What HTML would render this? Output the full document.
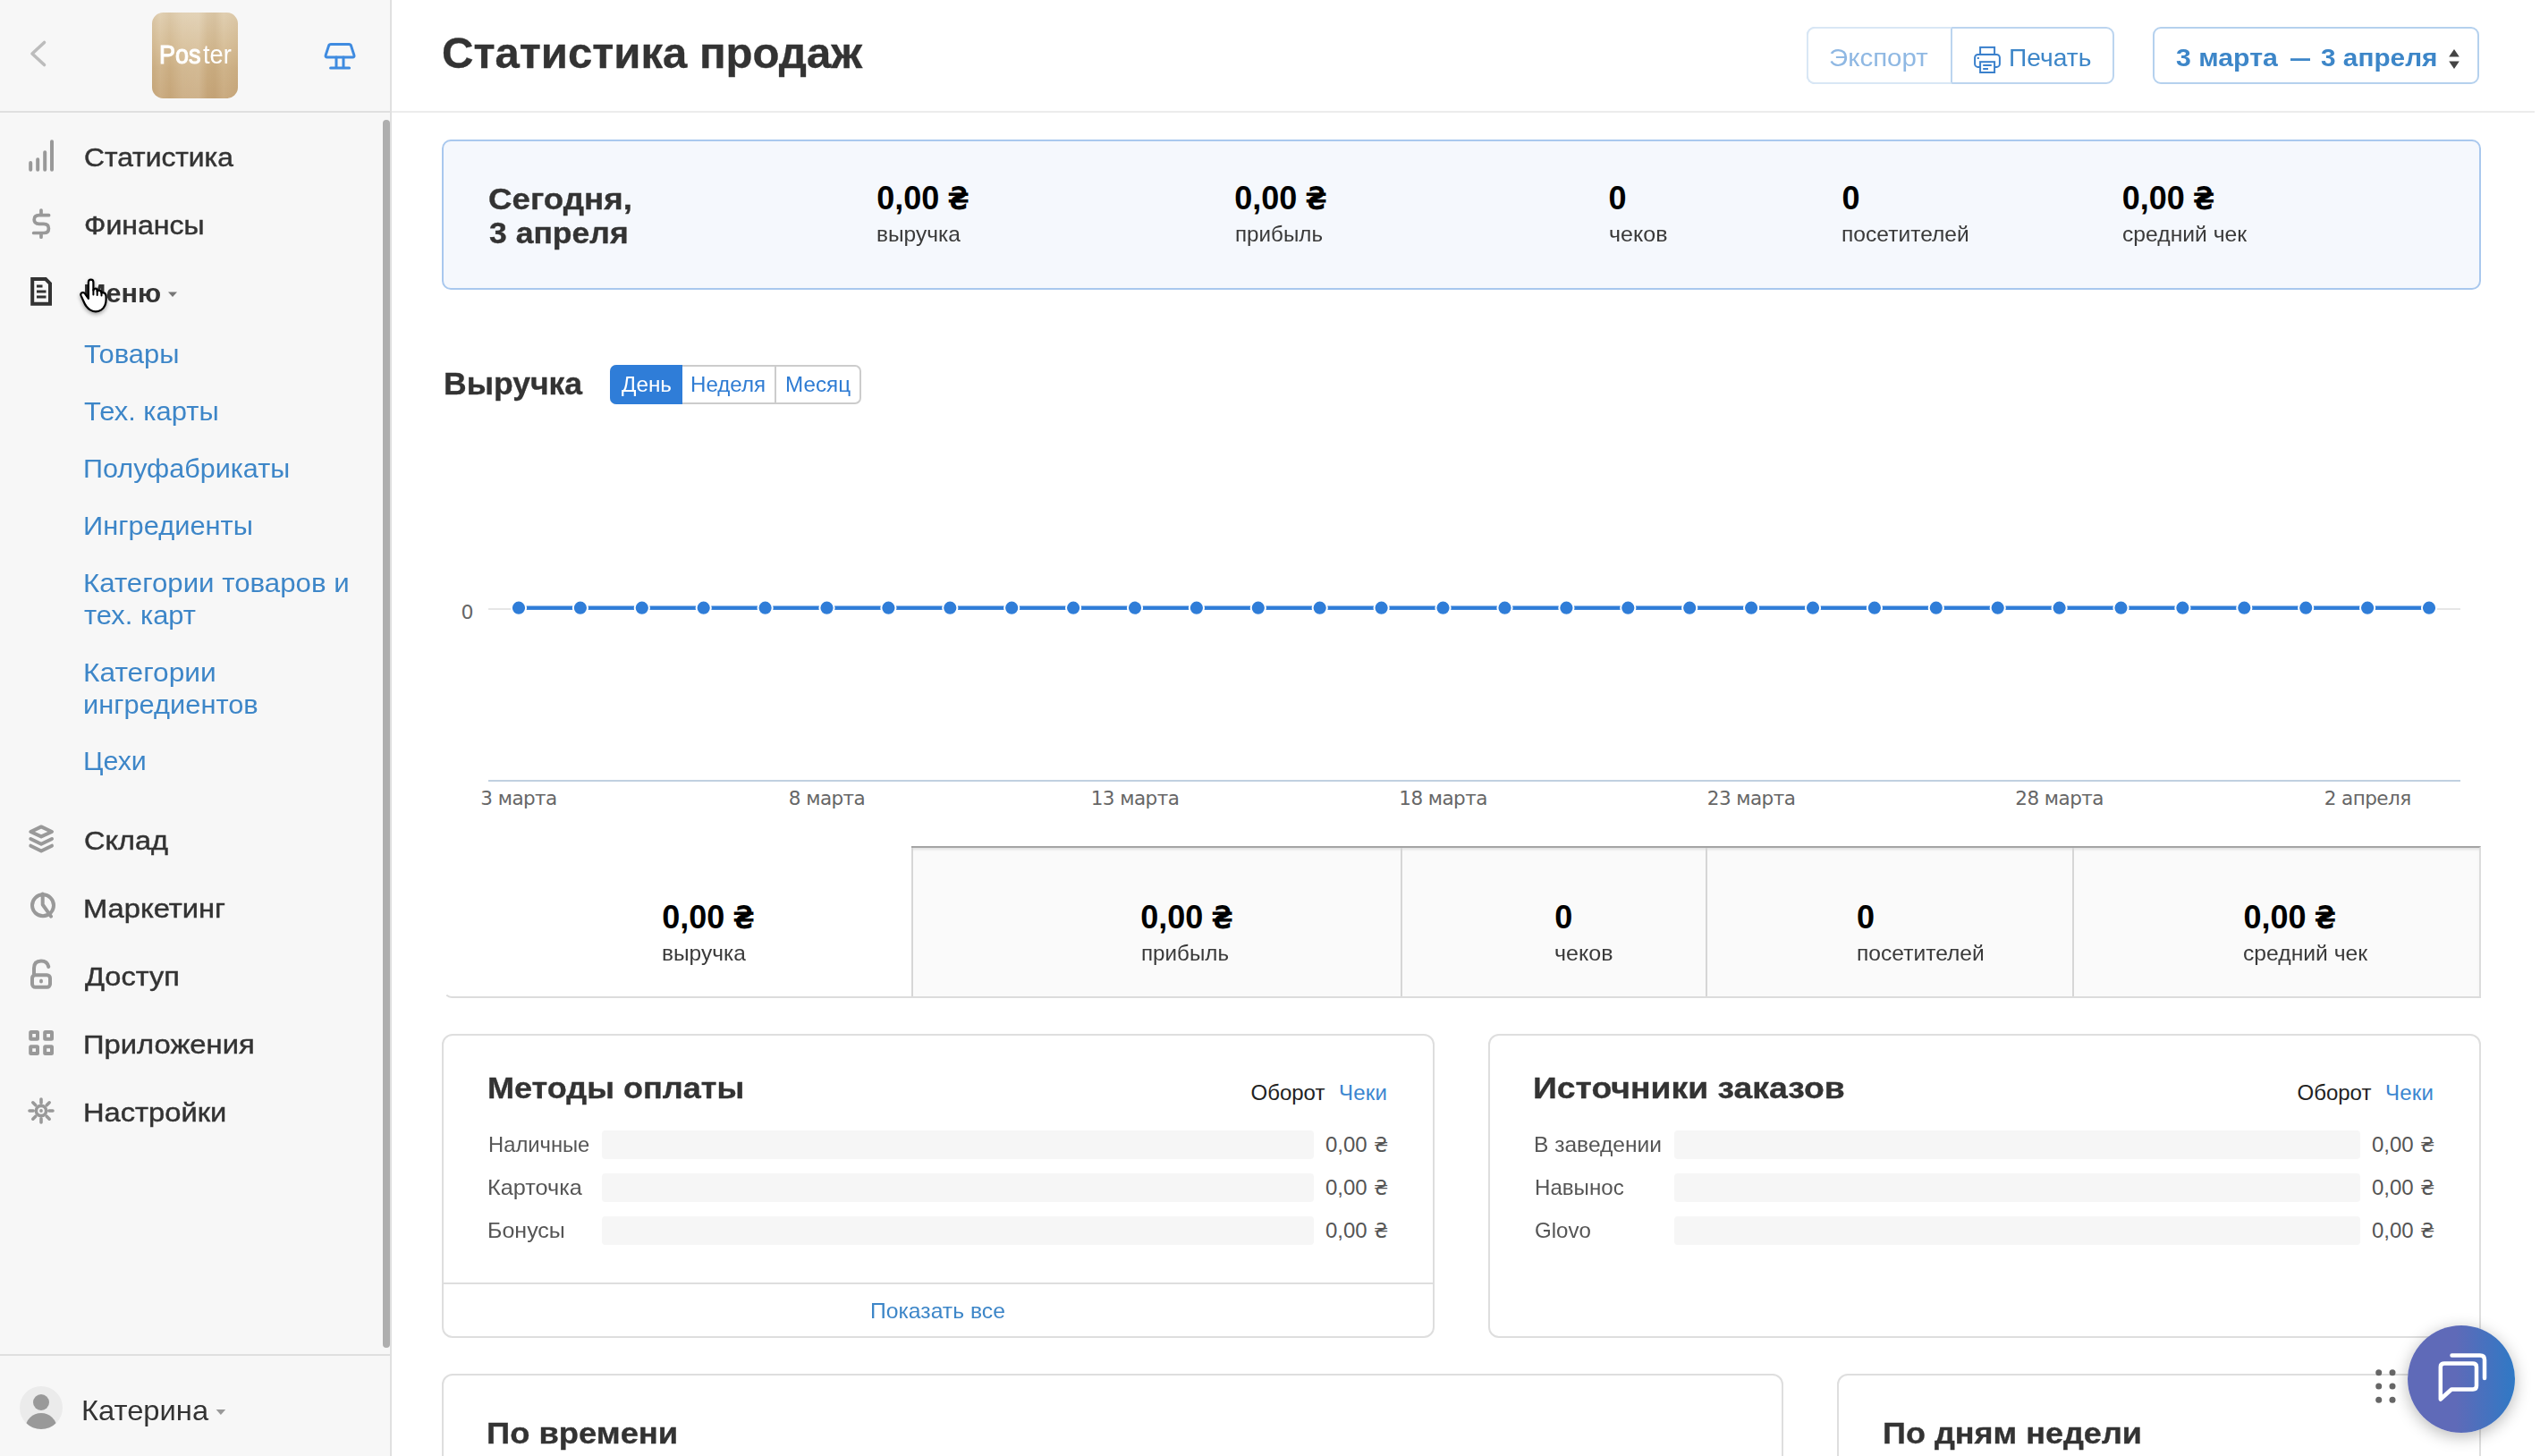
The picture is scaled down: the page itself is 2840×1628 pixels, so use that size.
<!DOCTYPE html>
<html lang="ru"><head><meta charset="utf-8"><title>Статистика продаж</title>
<style>
html,body{margin:0;padding:0;background:#fff;}
#root{width:2840px;height:1628px;overflow:hidden;background:#fff;position:relative;font-family:"Liberation Sans",sans-serif;}
.t{position:absolute;white-space:nowrap;}
.b{position:absolute;box-sizing:border-box;}
svg{position:absolute;left:0;top:0;overflow:visible;}
</style></head><body><div id="root">
<div class="b" style="left:0px;top:0px;width:438px;height:1628px;background:#f7f7f7;border-right:2px solid #e0e0e0;"></div>
<div class="b" style="left:0px;top:124px;width:436px;height:2px;background:#dfdfdf;"></div>
<div class="b" style="left:0px;top:1514px;width:436px;height:2px;background:#dfdfdf;"></div>
<div class="b" style="left:428px;top:134px;width:8px;height:1373px;background:#aeaeae;border-radius:4px;"></div>
<div class="b" style="left:170px;top:14px;width:96px;height:96px;border-radius:12.5px;overflow:hidden;background:linear-gradient(180deg,#dfcdae 0%,#d6bd96 40%,#cdb085 65%,#c8a87c 100%);"><div class="b" style="left:0;top:0;width:96px;height:96px;background:linear-gradient(90deg,rgba(150,110,60,.08) 0px,rgba(255,255,255,.06) 9px,rgba(150,110,60,.05) 20px,rgba(255,255,255,.10) 34px,rgba(255,255,255,.12) 52px,rgba(150,110,60,.07) 62px,rgba(150,110,60,.10) 70px,rgba(255,255,255,.04) 80px,rgba(150,110,60,.06) 96px);"></div></div>
<div class="t" style="top:46px;font-size:30px;line-height:30px;color:#fff;left:177.91px;transform:scaleX(0.8974);transform-origin:0 0;-webkit-text-stroke:1.1px #fff;">Pos</div>
<div class="t" style="top:46px;font-size:30px;line-height:30px;color:#fff;left:226.60px;transform:scaleX(0.9081);transform-origin:0 0;">ter</div>
<div class="t" style="top:161px;font-size:30px;line-height:30px;color:#333;left:94.04px;transform:scaleX(1.0591);transform-origin:0 0;-webkit-text-stroke:0.45px #333;">Статистика</div>
<div class="t" style="top:237px;font-size:30px;line-height:30px;color:#333;left:94.03px;transform:scaleX(1.0690);transform-origin:0 0;-webkit-text-stroke:0.45px #333;">Финансы</div>
<div class="t" style="top:313px;font-size:30px;line-height:30px;color:#333;font-weight:bold;left:92.96px;transform:scaleX(1.0206);transform-origin:0 0;">Меню</div>
<div class="t" style="top:381px;font-size:30px;line-height:30px;color:#3d86c8;left:93.90px;transform:scaleX(1.0316);transform-origin:0 0;">Товары</div>
<div class="t" style="top:445px;font-size:30px;line-height:30px;color:#3d86c8;left:93.90px;transform:scaleX(1.0313);transform-origin:0 0;">Тех. карты</div>
<div class="t" style="top:509px;font-size:30px;line-height:30px;color:#3d86c8;left:92.96px;transform:scaleX(1.0188);transform-origin:0 0;">Полуфабрикаты</div>
<div class="t" style="top:573px;font-size:30px;line-height:30px;color:#3d86c8;left:92.94px;transform:scaleX(1.0288);transform-origin:0 0;">Ингредиенты</div>
<div class="t" style="top:637px;font-size:30px;line-height:30px;color:#3d86c8;left:92.92px;transform:scaleX(1.0413);transform-origin:0 0;">Категории товаров и</div>
<div class="t" style="top:673px;font-size:30px;line-height:30px;color:#3d86c8;left:94.00px;transform:scaleX(1.0301);transform-origin:0 0;">тех. карт</div>
<div class="t" style="top:737px;font-size:30px;line-height:30px;color:#3d86c8;left:93.19px;transform:scaleX(1.0562);transform-origin:0 0;">Категории</div>
<div class="t" style="top:773px;font-size:30px;line-height:30px;color:#3d86c8;left:93.25px;transform:scaleX(1.0273);transform-origin:0 0;">ингредиентов</div>
<div class="t" style="top:836px;font-size:30px;line-height:30px;color:#3d86c8;left:93.28px;transform:scaleX(1.0118);transform-origin:0 0;">Цехи</div>
<div class="t" style="top:925px;font-size:30px;line-height:30px;color:#333;left:94.02px;transform:scaleX(1.0830);transform-origin:0 0;-webkit-text-stroke:0.45px #333;">Склад</div>
<div class="t" style="top:1001px;font-size:30px;line-height:30px;color:#333;left:92.92px;transform:scaleX(1.0902);transform-origin:0 0;-webkit-text-stroke:0.45px #333;">Маркетинг</div>
<div class="t" style="top:1077px;font-size:30px;line-height:30px;color:#333;left:95.10px;transform:scaleX(1.0828);transform-origin:0 0;-webkit-text-stroke:0.45px #333;">Доступ</div>
<div class="t" style="top:1153px;font-size:30px;line-height:30px;color:#333;left:92.92px;transform:scaleX(1.0922);transform-origin:0 0;-webkit-text-stroke:0.45px #333;">Приложения</div>
<div class="t" style="top:1229px;font-size:30px;line-height:30px;color:#333;left:92.92px;transform:scaleX(1.0894);transform-origin:0 0;-webkit-text-stroke:0.45px #333;">Настройки</div>
<div class="t" style="top:1561px;font-size:32px;line-height:32px;color:#333;left:91.35px;transform:scaleX(1.0228);transform-origin:0 0;">Катерина</div>
<svg width="438" height="1628" viewBox="0 0 438 1628" fill="none" stroke-linecap="round" stroke-linejoin="round"><path d="M49.5 47.5 L36 60 L49.5 72.5" stroke="#bcbcbc" stroke-width="3.6"/><g stroke="#3f8be0" stroke-width="3"><path d="M370 49.6 H390.2 Q392 49.6 392.6 51.4 L395.9 61.6 Q396.6 63.9 394.2 63.9 H365.9 Q363.5 63.9 364.2 61.6 L367.5 51.4 Q368.1 49.6 370 49.6 Z"/><path d="M376 64 V76 M384 64 V76 M369.6 76 H390.6"/></g><g stroke="#999" stroke-width="4"><path d="M34.2 182 V189.7 M42.2 178.3 V189.7 M50.2 170.3 V189.7 M58 158.2 V189.7"/></g><g stroke="#999" stroke-width="3.7"><path d="M54.6 240.7 H43.8 Q38.2 240.7 38.2 245.5 Q38.2 250.3 43.8 250.3 H48.8 Q54.4 250.3 54.4 255.4 Q54.4 260.5 48.8 260.5 H37.6 M46 235 V240 M46 261 V265.2"/></g><g stroke="#333" stroke-width="4" stroke-linejoin="miter"><path d="M36.2 312 H51 L56 317 V339.7 H36.2 Z"/></g><g stroke="#333" stroke-width="3" stroke-linecap="butt"><path d="M41 320 H47.5 M41 326 H51.5 M41 332 H51.5"/></g><path d="M188 326.5 H198 L193 332 Z" fill="#777" stroke="none"/><g stroke="#999" stroke-width="4" stroke-linejoin="round"><path d="M46.1 924.4 L58 930 L46.1 935.4 L34.3 930 Z"/><path d="M34.3 938 L46.1 943.8 L58 938 M34.3 945.7 L46.1 951.5 L58 945.7"/></g><g stroke="#999" stroke-width="4"><circle cx="48" cy="1012.3" r="12"/><path d="M47.7 999.5 V1011.5 L57 1024.6"/></g><g stroke="#999" stroke-width="4"><rect x="36" y="1090.2" width="20" height="13.6" rx="3.5"/><path d="M38 1089 V1082.5 Q38 1074.4 46 1074.4 Q53 1074.4 54.3 1081"/></g><ellipse cx="46" cy="1097" rx="2" ry="2.6" fill="#999"/><g stroke="#999" stroke-width="4" stroke-linejoin="round"><rect x="34.2" y="1154" width="7.8" height="7.8" rx="0.5"/><rect x="50.2" y="1154" width="7.8" height="7.8" rx="0.5"/><rect x="34.2" y="1170.2" width="7.8" height="7.8" rx="0.5"/><rect x="50.2" y="1170.2" width="7.8" height="7.8" rx="0.5"/></g><g stroke="#999" stroke-width="3.6"><circle cx="46" cy="1242" r="5.6"/><path d="M54.80 1242.00 L59.00 1242.00 M52.22 1248.22 L55.19 1251.19 M46.00 1250.80 L46.00 1255.00 M39.78 1248.22 L36.81 1251.19 M37.20 1242.00 L33.00 1242.00 M39.78 1235.78 L36.81 1232.81 M46.00 1233.20 L46.00 1229.00 M52.22 1235.78 L55.19 1232.81"/></g><circle cx="46" cy="1242" r="1.9" fill="#999"/><defs><clipPath id="av"><circle cx="46" cy="1574" r="24"/></clipPath></defs><circle cx="46" cy="1574" r="24" fill="#ebebeb"/><g clip-path="url(#av)" fill="#999"><circle cx="46" cy="1568" r="9"/><ellipse cx="46" cy="1597" rx="17.5" ry="17"/></g><path d="M241.6 1576 H252.2 L246.9 1582 Z" fill="#999"/><g style="filter:drop-shadow(0px 2.5px 2px rgba(0,0,0,.35))"><path d="M98.9 333.8 L98.9 315.6 Q98.9 312.7 101.65 312.7 Q104.4 312.7 104.4 315.6 L104.4 324.6 Q105 322.6 107 322.7 Q108.6 322.9 108.7 325.6 Q109.5 324.6 111 324.8 Q113.3 325 113.5 327.7 Q114.3 327 115.8 327.3 Q118.6 327.8 118.6 331.5 L118.6 335 Q118.6 343 113 346.6 Q107 350.2 101 346.6 Q96 343.5 93.5 337 L90.6 330.6 Q89.6 328.1 91.8 327.3 Q94 326.7 95.5 329 Z" fill="#fff" stroke="#000" stroke-width="2.2" stroke-linejoin="round"/><path d="M104.4 324 V329.4 M108.7 325.4 V329.9 M113.5 327.5 V330.6" stroke="#000" stroke-width="2" fill="none"/></g></svg>
<div class="b" style="left:438px;top:124px;width:2396px;height:2px;background:#ececec;"></div>
<div class="t" style="top:36px;font-size:48px;line-height:48px;color:#333;font-weight:bold;left:494.48px;transform:scaleX(1.0222);transform-origin:0 0;-webkit-text-stroke:0.35px #333;">Статистика продаж</div>
<div class="b" style="left:2020px;top:30px;width:344px;height:64px;border:2px solid #bcd5ef;border-radius:9px;background:#fff;"></div>
<div class="b" style="left:2020px;top:30px;width:163px;height:64px;border:2px solid #d9e7f5;border-right:2px solid #bcd5ef;border-radius:9px 0 0 9px;background:#fff;"></div>
<div class="t" style="top:51px;font-size:28px;line-height:28px;color:#8fb8e3;left:2045.25px;transform:scaleX(1.0529);transform-origin:0 0;">Экспорт</div>
<div class="t" style="top:51px;font-size:28px;line-height:28px;color:#3d86c8;left:2246.19px;transform:scaleX(1.0074);transform-origin:0 0;">Печать</div>
<div class="b" style="left:2407px;top:30px;width:365px;height:64px;border:2px solid #b5d1ee;border-radius:9px;background:#fff;"></div>
<div class="t" style="top:51px;font-size:28px;line-height:28px;color:#3d86c8;font-weight:bold;left:2433.20px;transform:scaleX(1.0812);transform-origin:0 0;">3 марта</div>
<div class="t" style="top:51px;font-size:28px;line-height:28px;color:#3d86c8;font-weight:bold;left:2560.50px;transform:scaleX(0.7857);transform-origin:0 0;">—</div>
<div class="t" style="top:51px;font-size:28px;line-height:28px;color:#3d86c8;font-weight:bold;left:2595.20px;transform:scaleX(1.0635);transform-origin:0 0;">3 апреля</div>
<svg width="2840" height="1628" viewBox="0 0 2840 1628" fill="none"><g stroke="#3a80cc" stroke-width="2"><rect x="2214.1" y="52.9" width="16" height="8"/><rect x="2208.1" y="60.9" width="27.8" height="14" rx="3.5"/><rect x="2214.1" y="69.2" width="16" height="11.8" fill="#fff"/><path d="M2217.2 73 H2226.8 M2217.2 77 H2223"/></g><rect x="2210.8" y="64" width="2" height="2" fill="#3a80cc"/><path d="M2744 55 L2749.8 63.5 H2738.2 Z M2744 77 L2749.8 68.5 H2738.2 Z" fill="#444"/></svg>
<div class="b" style="left:494px;top:156px;width:2280px;height:168px;border:2px solid #a9c8ee;border-radius:10px;background:#f5f8fd;"></div>
<div class="t" style="top:205px;font-size:34px;line-height:34px;color:#333;font-weight:bold;left:545.72px;transform:scaleX(1.0802);transform-origin:0 0;-webkit-text-stroke:0.35px #333;">Сегодня,</div>
<div class="t" style="top:243px;font-size:34px;line-height:34px;color:#333;font-weight:bold;left:546.80px;transform:scaleX(1.0450);transform-origin:0 0;-webkit-text-stroke:0.35px #333;">3 апреля</div>
<div class="t" style="top:204px;font-size:36px;line-height:36px;color:#000;font-weight:bold;left:980.25px;">0,00 <span style="font-family:'DejaVu Sans Mono',monospace;font-size:36px;margin-left:0.5px">₴</span></div>
<div class="t" style="top:250px;font-size:24px;line-height:24px;color:#3a3a3a;left:980.23px;transform:scaleX(1.0206);transform-origin:0 0;">выручка</div>
<div class="t" style="top:204px;font-size:36px;line-height:36px;color:#000;font-weight:bold;left:1380.25px;">0,00 <span style="font-family:'DejaVu Sans Mono',monospace;font-size:36px;margin-left:0.5px">₴</span></div>
<div class="t" style="top:250px;font-size:24px;line-height:24px;color:#3a3a3a;left:1381.34px;transform:scaleX(1.0078);transform-origin:0 0;">прибыль</div>
<div class="t" style="top:204px;font-size:36px;line-height:36px;color:#000;font-weight:bold;left:1798.50px;">0</div>
<div class="t" style="top:250px;font-size:24px;line-height:24px;color:#3a3a3a;left:1798.76px;transform:scaleX(1.0432);transform-origin:0 0;">чеков</div>
<div class="t" style="top:204px;font-size:36px;line-height:36px;color:#000;font-weight:bold;left:2059.50px;">0</div>
<div class="t" style="top:250px;font-size:24px;line-height:24px;color:#3a3a3a;left:2059.48px;transform:scaleX(1.0247);transform-origin:0 0;">посетителей</div>
<div class="t" style="top:204px;font-size:36px;line-height:36px;color:#000;font-weight:bold;left:2372.75px;">0,00 <span style="font-family:'DejaVu Sans Mono',monospace;font-size:36px;margin-left:0.5px">₴</span></div>
<div class="t" style="top:250px;font-size:24px;line-height:24px;color:#3a3a3a;left:2372.72px;transform:scaleX(1.0285);transform-origin:0 0;">средний чек</div>
<div class="t" style="top:412px;font-size:35.5px;line-height:35.5px;color:#333;font-weight:bold;left:495.50px;transform:scaleX(0.9997);transform-origin:0 0;-webkit-text-stroke:0.35px #333;">Выручка</div>
<div class="b" style="left:682px;top:408px;width:281px;height:44px;border:2px solid #ccc;border-radius:7px;background:#fff;"></div>
<div class="b" style="left:682px;top:408px;width:81px;height:44px;background:#2f7dd8;border-radius:7px 0 0 7px;"></div>
<div class="b" style="left:866px;top:410px;width:2px;height:40px;background:#ccc;"></div>
<div class="t" style="top:418px;font-size:24px;line-height:24px;color:#fff;left:694.50px;transform:scaleX(1.0117);transform-origin:0 0;">День</div>
<div class="t" style="top:418px;font-size:24px;line-height:24px;color:#2f7cd3;left:772.00px;transform:scaleX(1.0035);transform-origin:0 0;">Неделя</div>
<div class="t" style="top:418px;font-size:24px;line-height:24px;color:#2f7cd3;left:877.74px;transform:scaleX(1.0090);transform-origin:0 0;">Месяц</div>
<svg width="2840" height="1628" viewBox="0 0 2840 1628"><rect x="546" y="680" width="2205" height="2" fill="#e6e6e6"/><rect x="546" y="872" width="2205" height="2" fill="#c0d0e0"/><rect x="580.0" y="677.5" width="2136.0" height="4.4" fill="#2f7dd8"/><circle cx="580.0" cy="679.7" r="8.1" fill="#2f7dd8" stroke="#fff" stroke-width="2"/><circle cx="648.9" cy="679.7" r="8.1" fill="#2f7dd8" stroke="#fff" stroke-width="2"/><circle cx="717.8" cy="679.7" r="8.1" fill="#2f7dd8" stroke="#fff" stroke-width="2"/><circle cx="786.7" cy="679.7" r="8.1" fill="#2f7dd8" stroke="#fff" stroke-width="2"/><circle cx="855.6" cy="679.7" r="8.1" fill="#2f7dd8" stroke="#fff" stroke-width="2"/><circle cx="924.5" cy="679.7" r="8.1" fill="#2f7dd8" stroke="#fff" stroke-width="2"/><circle cx="993.4" cy="679.7" r="8.1" fill="#2f7dd8" stroke="#fff" stroke-width="2"/><circle cx="1062.3" cy="679.7" r="8.1" fill="#2f7dd8" stroke="#fff" stroke-width="2"/><circle cx="1131.2" cy="679.7" r="8.1" fill="#2f7dd8" stroke="#fff" stroke-width="2"/><circle cx="1200.1" cy="679.7" r="8.1" fill="#2f7dd8" stroke="#fff" stroke-width="2"/><circle cx="1269.0" cy="679.7" r="8.1" fill="#2f7dd8" stroke="#fff" stroke-width="2"/><circle cx="1337.9" cy="679.7" r="8.1" fill="#2f7dd8" stroke="#fff" stroke-width="2"/><circle cx="1406.8" cy="679.7" r="8.1" fill="#2f7dd8" stroke="#fff" stroke-width="2"/><circle cx="1475.7" cy="679.7" r="8.1" fill="#2f7dd8" stroke="#fff" stroke-width="2"/><circle cx="1544.6" cy="679.7" r="8.1" fill="#2f7dd8" stroke="#fff" stroke-width="2"/><circle cx="1613.5" cy="679.7" r="8.1" fill="#2f7dd8" stroke="#fff" stroke-width="2"/><circle cx="1682.5" cy="679.7" r="8.1" fill="#2f7dd8" stroke="#fff" stroke-width="2"/><circle cx="1751.4" cy="679.7" r="8.1" fill="#2f7dd8" stroke="#fff" stroke-width="2"/><circle cx="1820.3" cy="679.7" r="8.1" fill="#2f7dd8" stroke="#fff" stroke-width="2"/><circle cx="1889.2" cy="679.7" r="8.1" fill="#2f7dd8" stroke="#fff" stroke-width="2"/><circle cx="1958.1" cy="679.7" r="8.1" fill="#2f7dd8" stroke="#fff" stroke-width="2"/><circle cx="2027.0" cy="679.7" r="8.1" fill="#2f7dd8" stroke="#fff" stroke-width="2"/><circle cx="2095.9" cy="679.7" r="8.1" fill="#2f7dd8" stroke="#fff" stroke-width="2"/><circle cx="2164.8" cy="679.7" r="8.1" fill="#2f7dd8" stroke="#fff" stroke-width="2"/><circle cx="2233.7" cy="679.7" r="8.1" fill="#2f7dd8" stroke="#fff" stroke-width="2"/><circle cx="2302.6" cy="679.7" r="8.1" fill="#2f7dd8" stroke="#fff" stroke-width="2"/><circle cx="2371.5" cy="679.7" r="8.1" fill="#2f7dd8" stroke="#fff" stroke-width="2"/><circle cx="2440.4" cy="679.7" r="8.1" fill="#2f7dd8" stroke="#fff" stroke-width="2"/><circle cx="2509.3" cy="679.7" r="8.1" fill="#2f7dd8" stroke="#fff" stroke-width="2"/><circle cx="2578.2" cy="679.7" r="8.1" fill="#2f7dd8" stroke="#fff" stroke-width="2"/><circle cx="2647.1" cy="679.7" r="8.1" fill="#2f7dd8" stroke="#fff" stroke-width="2"/><circle cx="2716.0" cy="679.7" r="8.1" fill="#2f7dd8" stroke="#fff" stroke-width="2"/></svg>
<div class="t" style="top:674px;font-size:22px;line-height:22px;color:#666;font-family:'DejaVu Sans', sans-serif;right:2310.50px;">0</div>
<div class="t" style="top:882px;font-size:21.5px;line-height:21.5px;color:#666;letter-spacing:-0.55px;font-family:'DejaVu Sans', sans-serif;left:-20.00px;width:1200px;text-align:center;">3 марта</div>
<div class="t" style="top:882px;font-size:21.5px;line-height:21.5px;color:#666;letter-spacing:-0.55px;font-family:'DejaVu Sans', sans-serif;left:324.52px;width:1200px;text-align:center;">8 марта</div>
<div class="t" style="top:882px;font-size:21.5px;line-height:21.5px;color:#666;letter-spacing:-0.55px;font-family:'DejaVu Sans', sans-serif;left:669.03px;width:1200px;text-align:center;">13 марта</div>
<div class="t" style="top:882px;font-size:21.5px;line-height:21.5px;color:#666;letter-spacing:-0.55px;font-family:'DejaVu Sans', sans-serif;left:1013.55px;width:1200px;text-align:center;">18 марта</div>
<div class="t" style="top:882px;font-size:21.5px;line-height:21.5px;color:#666;letter-spacing:-0.55px;font-family:'DejaVu Sans', sans-serif;left:1358.06px;width:1200px;text-align:center;">23 марта</div>
<div class="t" style="top:882px;font-size:21.5px;line-height:21.5px;color:#666;letter-spacing:-0.55px;font-family:'DejaVu Sans', sans-serif;left:1702.58px;width:1200px;text-align:center;">28 марта</div>
<div class="t" style="top:882px;font-size:21.5px;line-height:21.5px;color:#666;letter-spacing:-0.55px;font-family:'DejaVu Sans', sans-serif;left:2047.10px;width:1200px;text-align:center;">2 апреля</div>
<div class="b" style="left:496px;top:946px;width:2278px;height:170px;border-bottom:2px solid #dcdcdc;border-left:2px solid transparent;border-bottom-left-radius:9px;"></div>
<div class="b" style="left:1019px;top:946px;width:1755px;height:168px;background:#fafafa;border-top:2px solid #a4a4a4;border-right:2px solid #dcdcdc;box-shadow:inset 0 3px 3px -1px rgba(0,0,0,.10);"></div>
<div class="b" style="left:1019px;top:948px;width:2px;height:166px;background:#d6d6d6;"></div>
<div class="b" style="left:1566px;top:948px;width:2px;height:166px;background:#d6d6d6;"></div>
<div class="b" style="left:1907px;top:948px;width:2px;height:166px;background:#d6d6d6;"></div>
<div class="b" style="left:2317px;top:948px;width:2px;height:166px;background:#d6d6d6;"></div>
<div class="t" style="top:1008px;font-size:36px;line-height:36px;color:#000;font-weight:bold;left:740.20px;">0,00 <span style="font-family:'DejaVu Sans Mono',monospace;font-size:36px;margin-left:0.5px">₴</span></div>
<div class="t" style="top:1054px;font-size:24px;line-height:24px;color:#3a3a3a;left:740.18px;transform:scaleX(1.0206);transform-origin:0 0;">выручка</div>
<div class="t" style="top:1008px;font-size:36px;line-height:36px;color:#000;font-weight:bold;left:1275.20px;">0,00 <span style="font-family:'DejaVu Sans Mono',monospace;font-size:36px;margin-left:0.5px">₴</span></div>
<div class="t" style="top:1054px;font-size:24px;line-height:24px;color:#3a3a3a;left:1276.29px;transform:scaleX(1.0078);transform-origin:0 0;">прибыль</div>
<div class="t" style="top:1008px;font-size:36px;line-height:36px;color:#000;font-weight:bold;left:1738.20px;">0</div>
<div class="t" style="top:1054px;font-size:24px;line-height:24px;color:#3a3a3a;left:1738.46px;transform:scaleX(1.0432);transform-origin:0 0;">чеков</div>
<div class="t" style="top:1008px;font-size:36px;line-height:36px;color:#000;font-weight:bold;left:2076.00px;">0</div>
<div class="t" style="top:1054px;font-size:24px;line-height:24px;color:#3a3a3a;left:2075.98px;transform:scaleX(1.0247);transform-origin:0 0;">посетителей</div>
<div class="t" style="top:1008px;font-size:36px;line-height:36px;color:#000;font-weight:bold;left:2508.50px;">0,00 <span style="font-family:'DejaVu Sans Mono',monospace;font-size:36px;margin-left:0.5px">₴</span></div>
<div class="t" style="top:1054px;font-size:24px;line-height:24px;color:#3a3a3a;left:2508.47px;transform:scaleX(1.0285);transform-origin:0 0;">средний чек</div>
<div class="b" style="left:494px;top:1156px;width:1110px;height:340px;border:2px solid #dedede;border-radius:12px;background:#fff;"></div>
<div class="b" style="left:1664px;top:1156px;width:1110px;height:340px;border:2px solid #dedede;border-radius:12px;background:#fff;"></div>
<div class="b" style="left:494px;top:1536px;width:1500px;height:200px;border:2px solid #dedede;border-radius:12px;background:#fff;"></div>
<div class="b" style="left:2054px;top:1536px;width:720px;height:200px;border:2px solid #dedede;border-radius:12px;background:#fff;"></div>
<div class="b" style="left:496px;top:1434px;width:1106px;height:2px;background:#dedede;"></div>
<div class="t" style="top:1199px;font-size:34px;line-height:34px;color:#333;font-weight:bold;left:544.88px;transform:scaleX(1.0606);transform-origin:0 0;-webkit-text-stroke:0.35px #333;">Методы оплаты</div>
<div class="t" style="top:1199px;font-size:34px;line-height:34px;color:#333;font-weight:bold;left:1714.30px;transform:scaleX(1.0984);transform-origin:0 0;-webkit-text-stroke:0.35px #333;">Источники заказов</div>
<div class="t" style="top:1585px;font-size:34px;line-height:34px;color:#333;font-weight:bold;left:544.36px;transform:scaleX(1.0694);transform-origin:0 0;-webkit-text-stroke:0.35px #333;">По времени</div>
<div class="t" style="top:1585px;font-size:34px;line-height:34px;color:#333;font-weight:bold;left:2104.68px;transform:scaleX(1.0595);transform-origin:0 0;-webkit-text-stroke:0.35px #333;">По дням недели</div>
<div class="t" style="top:1210px;font-size:24px;line-height:24px;color:#222;left:1398.50px;">Оборот</div>
<div class="t" style="top:1210px;font-size:24px;line-height:24px;color:#3a86d0;letter-spacing:0.2px;right:1289.00px;">Чеки</div>
<div class="t" style="top:1210px;font-size:24px;line-height:24px;color:#222;left:2568.50px;">Оборот</div>
<div class="t" style="top:1210px;font-size:24px;line-height:24px;color:#3a86d0;letter-spacing:0.2px;right:119.00px;">Чеки</div>
<div class="t" style="top:1268px;font-size:24px;line-height:24px;color:#555;left:545.51px;transform:scaleX(0.9903);transform-origin:0 0;">Наличные</div>
<div class="b" style="left:673px;top:1264px;width:796px;height:32px;background:#f6f6f6;border-radius:4px;"></div>
<div class="t" style="top:1268px;font-size:24px;line-height:24px;color:#555;right:1289.00px;">0,00 <span style="font-family:'DejaVu Sans Mono',monospace;font-size:23px;margin-left:1.8px;">₴</span></div>
<div class="t" style="top:1316px;font-size:24px;line-height:24px;color:#555;left:545.45px;transform:scaleX(1.0527);transform-origin:0 0;">Карточка</div>
<div class="b" style="left:673px;top:1312px;width:796px;height:32px;background:#f6f6f6;border-radius:4px;"></div>
<div class="t" style="top:1316px;font-size:24px;line-height:24px;color:#555;right:1289.00px;">0,00 <span style="font-family:'DejaVu Sans Mono',monospace;font-size:23px;margin-left:1.8px;">₴</span></div>
<div class="t" style="top:1364px;font-size:24px;line-height:24px;color:#555;left:545.46px;transform:scaleX(1.0422);transform-origin:0 0;">Бонусы</div>
<div class="b" style="left:673px;top:1360px;width:796px;height:32px;background:#f6f6f6;border-radius:4px;"></div>
<div class="t" style="top:1364px;font-size:24px;line-height:24px;color:#555;right:1289.00px;">0,00 <span style="font-family:'DejaVu Sans Mono',monospace;font-size:23px;margin-left:1.8px;">₴</span></div>
<div class="t" style="top:1268px;font-size:24px;line-height:24px;color:#555;left:1715.48px;transform:scaleX(1.0230);transform-origin:0 0;">В заведении</div>
<div class="b" style="left:1872px;top:1264px;width:767px;height:32px;background:#f6f6f6;border-radius:4px;"></div>
<div class="t" style="top:1268px;font-size:24px;line-height:24px;color:#555;right:119.00px;">0,00 <span style="font-family:'DejaVu Sans Mono',monospace;font-size:23px;margin-left:1.8px;">₴</span></div>
<div class="t" style="top:1316px;font-size:24px;line-height:24px;color:#555;left:1715.50px;transform:scaleX(1.0043);transform-origin:0 0;">Навынос</div>
<div class="b" style="left:1872px;top:1312px;width:767px;height:32px;background:#f6f6f6;border-radius:4px;"></div>
<div class="t" style="top:1316px;font-size:24px;line-height:24px;color:#555;right:119.00px;">0,00 <span style="font-family:'DejaVu Sans Mono',monospace;font-size:23px;margin-left:1.8px;">₴</span></div>
<div class="t" style="top:1364px;font-size:24px;line-height:24px;color:#555;left:1715.50px;transform:scaleX(1.0025);transform-origin:0 0;">Glovo</div>
<div class="b" style="left:1872px;top:1360px;width:767px;height:32px;background:#f6f6f6;border-radius:4px;"></div>
<div class="t" style="top:1364px;font-size:24px;line-height:24px;color:#555;right:119.00px;">0,00 <span style="font-family:'DejaVu Sans Mono',monospace;font-size:23px;margin-left:1.8px;">₴</span></div>
<div class="t" style="top:1454px;font-size:24px;line-height:24px;color:#3d86c8;left:972.97px;transform:scaleX(1.0298);transform-origin:0 0;">Показать все</div>
<svg width="2840" height="1628" viewBox="0 0 2840 1628" fill="none"><g fill="#666"><circle cx="2659.7" cy="1534.7" r="3.5"/><circle cx="2675" cy="1534.7" r="3.5"/><circle cx="2659.7" cy="1550" r="3.5"/><circle cx="2675" cy="1550" r="3.5"/><circle cx="2659.7" cy="1565.2" r="3.5"/><circle cx="2675" cy="1565.2" r="3.5"/></g></svg>
<div class="b" style="left:2692px;top:1482px;width:120px;height:120px;border-radius:60px;background:linear-gradient(90deg,#5f6ab8 0%,#5f6ab8 45%,#2f79c5 100%);box-shadow:0 4px 18px rgba(0,0,0,.28);"></div>
<svg width="2840" height="1628" viewBox="0 0 2840 1628" fill="none" stroke="#fff" stroke-width="4.5" stroke-linecap="round" stroke-linejoin="round"><path d="M2733 1524.4 H2765 Q2769 1524.4 2769 1528.4 V1549.5 Q2769 1553.5 2765 1553.5 H2741 L2728.8 1564.5 V1528.4 Q2728.8 1524.4 2733 1524.4 Z"/><path d="M2741.5 1515.5 H2773 Q2778 1515.5 2778 1520.5 V1541"/></svg>
</div>
<script>(function(){var w=window.innerWidth;if(w&&Math.abs(w-2840)>40){document.getElementById("root").style.zoom=(w/2840);}})();</script>
</body></html>
